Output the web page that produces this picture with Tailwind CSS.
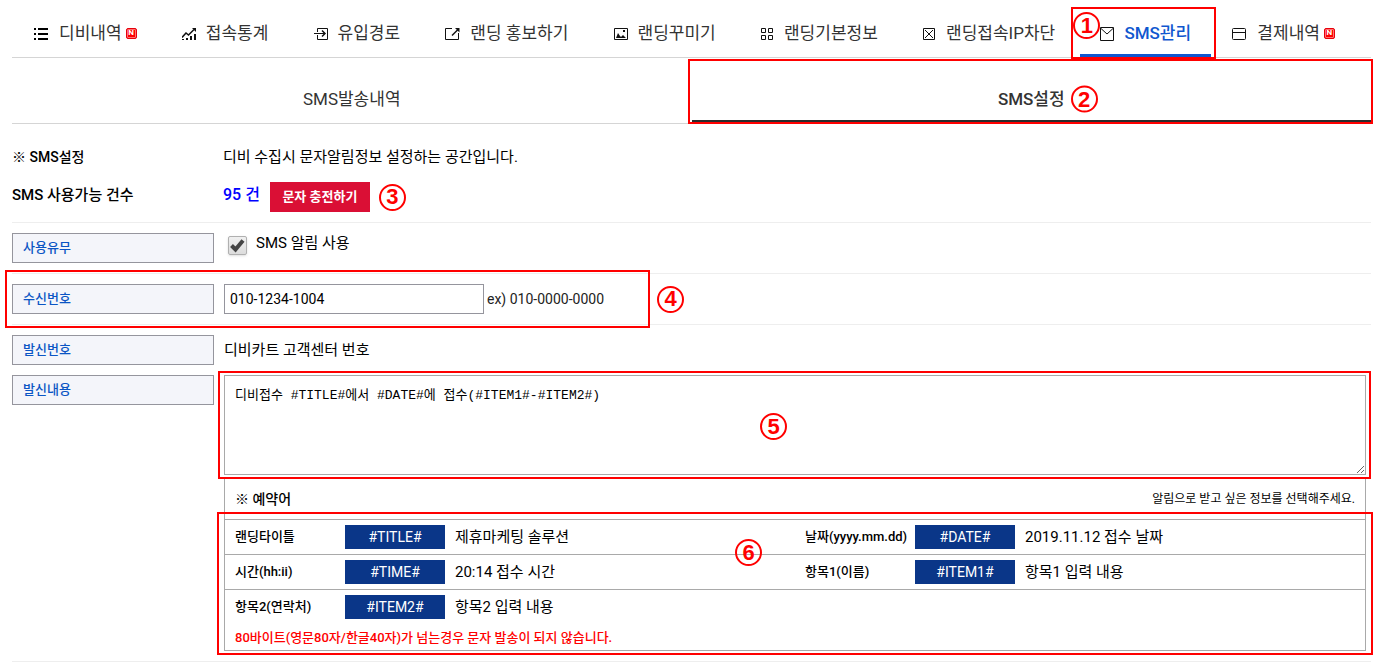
<!DOCTYPE html>
<html lang="ko">

<head>
    <meta charset="UTF-8">
    <meta name="viewport" content="width=device-width, initial-scale=1.0">
    <title>SMS설정</title>
    <script src="https://cdn.jsdelivr.net/npm/@tailwindcss/browser@4"></script>
</head>

<body class="bg-white px-3 font-[Roboto,'Noto_Sans_CJK_KR',sans-serif] text-[15px] leading-5 text-black">
    <!-- Main menu -->
    <nav class="flex justify-between border-b border-[#d5d5d5] pl-[2px] pr-4 text-[17px] leading-6 text-[#333] whitespace-nowrap">
        <a href="#" class="flex h-[57px] items-center gap-[11px] px-5 pt-[9px]">
            <svg class="mt-[2px] h-3 w-[14px]" viewBox="0 0 14 12" fill="#000" shape-rendering="crispEdges">
                <path d="M0 0h2v2H0zM4 0h10v2H4zM0 5h2v2H0zM4 5h10v2H4zM0 10h2v2H0zM4 10h10v2H4z" />
            </svg>
            <span class="flex items-center gap-1">디비내역 <span class="flex size-[11px] items-center justify-center rounded-xs border border-red-600 bg-[#f00] text-[8px] leading-none font-bold text-white inset-ring inset-ring-[#ff7070]">N</span></span>
        </a>
        <a href="#" class="flex h-[57px] items-center gap-[10px] px-5 pt-[9px]">
            <svg class="mt-[2px] h-3 w-[14px]" viewBox="0 0 14 12" fill="none" stroke="#111">
                <path d="M0 9.500l4-4.500 2.500 2L12 1.500" stroke-width="1.500" />
                <path d="M10 0h4v4z" fill="#111" stroke="none" />
                <path d="M1 11V12M5 10V12M9 8V12M13 6V12" stroke-width="2" />
            </svg>
            접속통계
        </a>
        <a href="#" class="flex h-[57px] items-center gap-[10px] px-5 pt-[9px]">
            <svg class="mt-[2px] h-3 w-[14px]" viewBox="0 0 14 12" fill="none" stroke="#111">
                <path d="M3.500 4V.5h10v11h-10V7M0 5.500h10" />
                <path d="M8 2.500l3 3-3 3" stroke-width="1.500" />
            </svg>
            유입경로
        </a>
        <a href="#" class="flex h-[57px] items-center gap-[10px] px-5 pt-[9px]">
            <svg class="mt-[2px] h-3 w-[15px]" viewBox="0 0 15 12" fill="none" stroke="#111">
                <path d="M7 .5H.5v11h13V5" />
                <path d="M7 7.500L13 1.500" stroke-width="1.500" />
                <path d="M10 0H14.500v4.500z" fill="#111" stroke="none" />
            </svg>
            랜딩 홍보하기
        </a>
        <a href="#" class="flex h-[57px] items-center gap-[10px] px-5 pt-[9px]">
            <svg class="mt-[2px] h-3 w-[14px]" viewBox="0 0 14 12" fill="none" stroke="#111">
                <path d="M.5 .5h13v11H.5z" />
                <path d="M2 10l2-5 2 3 1 1 2-2 3 3zM9 2h2v2H9z" fill="#111" stroke="none" />
            </svg>
            랜딩꾸미기
        </a>
        <a href="#" class="flex h-[57px] items-center gap-[11px] px-5 pt-[9px]">
            <svg class="mt-[2px] size-3" viewBox="0 0 12 12" fill="none" stroke="#111">
                <path d="M.5 .5h4v4h-4zM7.500 .5h4v4h-4zM.5 7.500h4v4h-4zM7.500 7.500h4v4h-4z" />
            </svg>
            랜딩기본정보
        </a>
        <a href="#" class="flex h-[57px] items-center gap-[11px] px-5 pt-[9px]">
            <svg class="mt-[2px] size-3" viewBox="0 0 12 12" fill="none" stroke="#111">
                <path d="M.5 .5h11v11H.5z" />
                <path d="M2 2l8 8M10 2l-8 8" />
            </svg>
            랜딩접속IP차단
        </a>
        <a href="#" class="relative flex h-[57px] items-center gap-[10px] border-b-3 border-[#1057cf] px-5 pt-3 font-medium text-[#1057cf]">
            <svg class="mt-[2px] size-[14px]" viewBox="0 0 14 14" fill="none" stroke="#111">
                <path d="M.5 .5h13v13H.5z" />
                <path d="M1 1.500l6 5.500 6-5.500" />
            </svg>
            SMS관리
            <span class="absolute top-[7px] -right-[5px] -bottom-[5px] -left-[9px] border-2 border-[#f00]"></span>
            <span class="absolute top-3 -left-[7px] flex size-[27px] items-center justify-center rounded-full border-2 border-[#f00] font-['Liberation_Sans',sans-serif] text-[22px] font-bold text-[#f00]">1</span>
        </a>
        <a href="#" class="flex h-[57px] items-center gap-[11px] pt-[9px] pr-5 pl-4">
            <svg class="mt-[2px] h-3 w-[14px]" viewBox="0 0 14 12" fill="none" stroke="#111">
                <rect x=".5" y=".5" width="13" height="11" rx="1" />
                <path d="M0 4.500h14" />
            </svg>
            <span class="flex items-center gap-1">결제내역 <span class="flex size-[11px] items-center justify-center rounded-xs border border-red-600 bg-[#f00] text-[8px] leading-none font-bold text-white inset-ring inset-ring-[#ff7070]">N</span></span>
        </a>
    </nav>

    <!-- Sub tabs -->
    <div class="grid grid-cols-2 border-b border-[#d5d5d5] text-center text-[17px] leading-6 text-[#333]">
        <a href="#" class="pt-[29px] pb-3">SMS발송내역</a>
        <a href="#" class="relative border-b-3 border-[#2b2b2b] pt-[29px] pb-[9px] font-medium">
            <span class="relative">SMS설정
                <span class="absolute top-1/2 left-full ml-[6px] flex size-[27px] -translate-y-1/2 items-center justify-center rounded-full border-2 border-[#f00] font-['Liberation_Sans',sans-serif] text-[22px] font-bold text-[#f00]">2</span>
            </span>
            <span class="absolute top-px -right-[2px] -bottom-[4px] -left-1 border-2 border-[#f00]"></span>
        </a>
    </div>

    <form>
        <!-- Summary -->
        <div class="grid grid-cols-[202px_1fr] items-center gap-x-[9px] gap-y-[10px] border-b border-[#eee] pt-[18px] pb-[10px]">
            <h1 class="text-[14px] font-medium">※ SMS설정</h1>
            <p class="leading-[30px]">디비 수집시 문자알림정보 설정하는 공간입니다.</p>
            <h2 class="pb-1 text-[15px] font-medium">SMS 사용가능 건수</h2>
            <div class="flex items-center">
                <strong class="pb-1 text-[16px] font-medium text-[#00f]">95 건</strong>
                <button type="button" class="ml-[10px] h-[30px] w-[100px] bg-[#da0f35] text-[13px] font-bold text-white">문자 충전하기</button>
                <span class="ml-[9px] flex size-[27px] items-center justify-center rounded-full border-2 border-[#f00] font-['Liberation_Sans',sans-serif] text-[22px] font-bold text-[#f00]">3</span>
            </div>
        </div>

        <!-- Use on/off -->
        <div class="flex gap-[10px] border-b border-[#eee] py-[10px]">
            <label for="use" class="h-[30px] w-[202px] border border-[#95959d] bg-[#f4f5fa] px-[10px] text-[13px] leading-7 font-medium text-[#0b55c4]">사용유무</label>
            <div class="flex items-start pl-1">
                <span class="relative mt-[3px] size-[19px]">
                    <input type="checkbox" id="use" checked class="block size-[19px] appearance-none rounded-xs border border-[#b0b0b0] bg-linear-to-b from-[#f0f0f0] to-[#dcdcdc] shadow-sm">
                    <svg class="pointer-events-none absolute inset-0" viewBox="0 0 19 19" fill="none" stroke="#444" stroke-width="4">
                        <path d="M3.500 9.500l4 4L15 4.500" />
                    </svg>
                </span>
                <label for="use" class="ml-[9px]">SMS 알림 사용</label>
            </div>
        </div>

        <!-- Receiving number -->
        <div class="relative flex items-center gap-[10px] border-b border-[#eee] py-[10px]">
            <label for="phone" class="h-[30px] w-[202px] border border-[#95959d] bg-[#f4f5fa] px-[10px] text-[13px] leading-7 font-medium text-[#0b55c4]">수신번호</label>
            <div class="flex items-center gap-[3px]">
                <input type="text" id="phone" value="010-1234-1004" class="h-[30px] w-[260px] border border-[#95959d] px-[5px] text-[14px]">
                <span class="text-[14px] text-[#222]">ex) 010-0000-0000</span>
            </div>
            <span class="pointer-events-none absolute -top-1 -bottom-1 -left-[7px] w-[645px] border-2 border-[#f00]"></span>
            <span class="absolute left-[645px] flex size-[27px] items-center justify-center rounded-full border-2 border-[#f00] font-['Liberation_Sans',sans-serif] text-[22px] font-bold text-[#f00]">4</span>
        </div>

        <!-- Sending number -->
        <div class="flex gap-[10px] pt-[10px]">
            <div class="h-[30px] w-[202px] border border-[#95959d] bg-[#f4f5fa] px-[10px] text-[13px] leading-7 font-medium text-[#0b55c4]">발신번호</div>
            <p class="pt-[5px]">디비카트 고객센터 번호</p>
        </div>

        <!-- Message -->
        <div class="flex items-start gap-[10px] border-b border-[#eee] py-[10px]">
            <label for="message" class="h-[30px] w-[202px] border border-[#95959d] bg-[#f4f5fa] px-[10px] text-[13px] leading-7 font-medium text-[#0b55c4]">발신내용</label>
            <div class="mr-[5px] flex-1">
                <div class="relative">
                    <textarea id="message" class="block h-[100px] w-full resize border border-[#a9a9a9] p-[10px] font-['Liberation_Mono','Noto_Sans_CJK_KR',monospace] text-[13px] leading-5">디비접수 #TITLE#에서 #DATE#에 접수(#ITEM1#-#ITEM2#)</textarea>
                    <span class="pointer-events-none absolute -top-1 -right-[5px] -bottom-1 -left-[6px] border-2 border-[#f00]"></span>
                    <span class="pointer-events-none absolute top-[38px] left-[536px] flex size-[27px] items-center justify-center rounded-full border-2 border-[#f00] font-['Liberation_Sans',sans-serif] text-[22px] font-bold text-[#f00]">5</span>
                </div>

                <!-- Reserved words -->
                <div class="mt-[3px] border border-[#a9a9a9]">
                    <div class="flex h-10 items-center justify-between px-[10px]">
                        <h3 class="text-[14px] font-medium">※ 예약어</h3>
                        <p class="text-[12px]">알림으로 받고 싶은 정보를 선택해주세요.</p>
                    </div>
                    <div class="relative">
                        <table class="w-full table-fixed border-separate border-spacing-0 text-left">
                            <tr class="h-[35px]">
                                <th class="w-[120px] border-t border-[#a9a9a9] pl-[10px] text-[13px] font-medium">랜딩타이틀</th>
                                <td class="w-[100px] border-t border-[#a9a9a9]"><button type="button" class="block h-6 w-full bg-[#0a3688] text-[14px] text-white">#TITLE#</button></td>
                                <td class="border-t border-[#a9a9a9] pl-[10px] text-[15px]">제휴마케팅 솔루션</td>
                                <th class="w-[120px] border-t border-[#a9a9a9] pl-[10px] text-[13px] font-medium">날짜(yyyy.mm.dd)</th>
                                <td class="w-[100px] border-t border-[#a9a9a9]"><button type="button" class="block h-6 w-full bg-[#0a3688] text-[14px] text-white">#DATE#</button></td>
                                <td class="border-t border-[#a9a9a9] pl-[10px] text-[15px]">2019.11.12 접수 날짜</td>
                            </tr>
                            <tr class="h-[35px]">
                                <th class="border-t border-[#a9a9a9] pl-[10px] text-[13px] font-medium">시간(hh:ii)</th>
                                <td class="border-t border-[#a9a9a9]"><button type="button" class="block h-6 w-full bg-[#0a3688] text-[14px] text-white">#TIME#</button></td>
                                <td class="border-t border-[#a9a9a9] pl-[10px] text-[15px]">20:14 접수 시간</td>
                                <th class="border-t border-[#a9a9a9] pl-[10px] text-[13px] font-medium">항목1(이름)</th>
                                <td class="border-t border-[#a9a9a9]"><button type="button" class="block h-6 w-full bg-[#0a3688] text-[14px] text-white">#ITEM1#</button></td>
                                <td class="border-t border-[#a9a9a9] pl-[10px] text-[15px]">항목1 입력 내용</td>
                            </tr>
                            <tr class="h-[35px]">
                                <th class="border-t border-[#a9a9a9] pl-[10px] text-[13px] font-medium">항목2(연락처)</th>
                                <td class="border-t border-[#a9a9a9]"><button type="button" class="block h-6 w-full bg-[#0a3688] text-[14px] text-white">#ITEM2#</button></td>
                                <td class="border-t border-[#a9a9a9] pl-[10px] text-[15px]">항목2 입력 내용</td>
                                <td colspan="3" class="border-t border-[#a9a9a9]"></td>
                            </tr>
                        </table>
                        <p class="px-[10px] pt-1 pb-[2px] text-[13px] font-medium text-[#f00]">80바이트(영문80자/한글40자)가 넘는경우 문자 발송이 되지 않습니다.</p>
                        <span class="pointer-events-none absolute -top-[7px] -right-[8px] -bottom-[5px] -left-[8px] border-2 border-[#f00]"></span>
                        <span class="pointer-events-none absolute top-5 left-[510px] flex size-[27px] items-center justify-center rounded-full border-2 border-[#f00] font-['Liberation_Sans',sans-serif] text-[22px] font-bold text-[#f00]">6</span>
                    </div>
                </div>
            </div>
        </div>
    </form>
</body>

</html>
